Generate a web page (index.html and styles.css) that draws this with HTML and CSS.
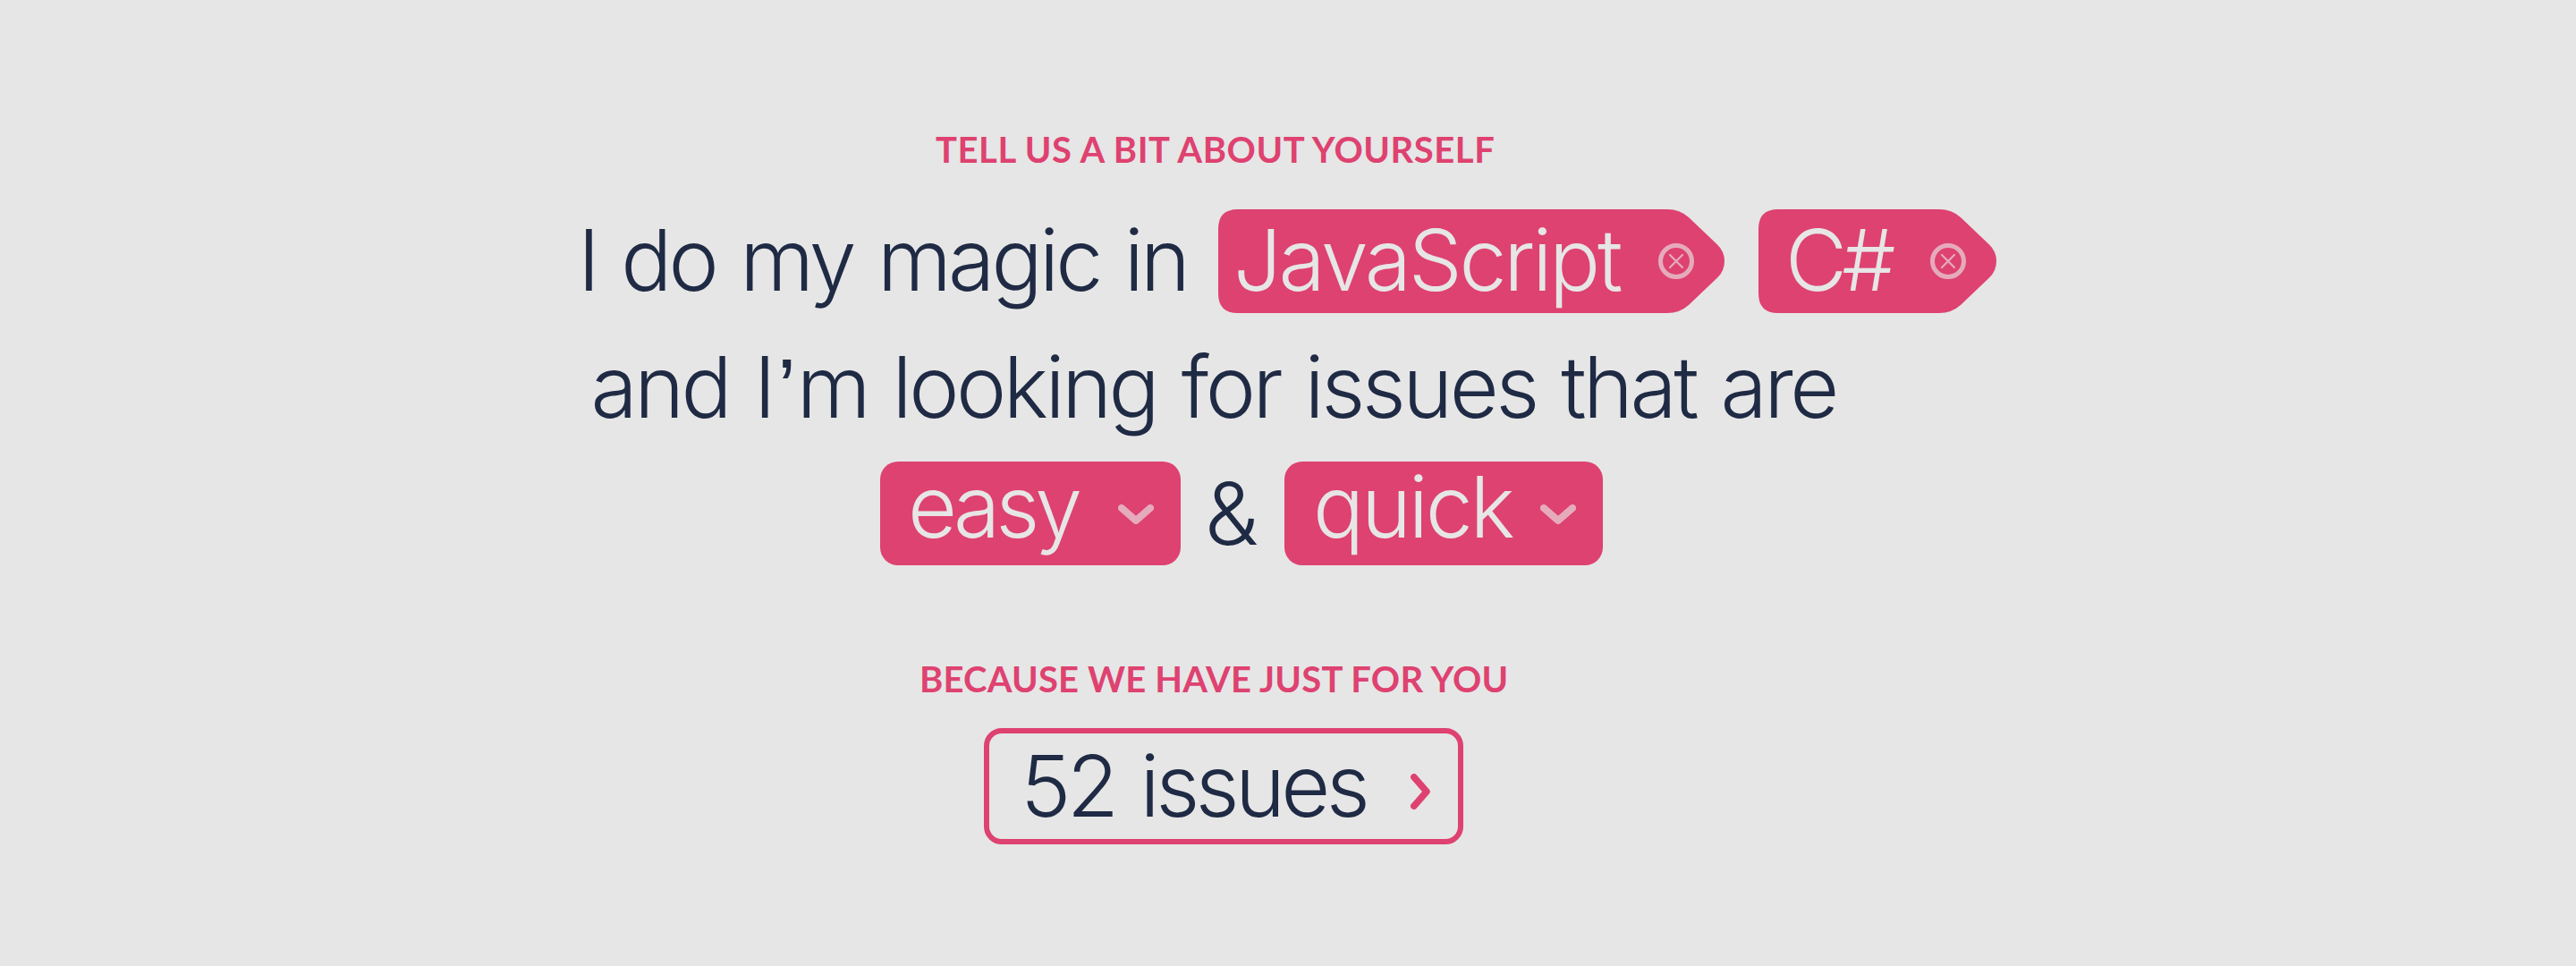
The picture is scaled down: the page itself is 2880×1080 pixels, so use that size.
FILE: index.html
```html
<!DOCTYPE html>
<html lang="en">
<head>
<meta charset="utf-8">
<title>Issue finder</title>
<link rel="stylesheet" href="styles.css">
</head>
<body>
<main class="page">
  <h2 class="label label-intro">TELL US A BIT ABOUT YOURSELF</h2>
  <div class="row row-skills">
    <span class="skills-text">I do my magic in</span>
    <span class="tag tag-js">
      <svg class="tag-shape" width="566" height="116" viewBox="0 0 566 116"><path d="M22 0H502Q516 0 526 9L558 39.500Q566 47 566 58T558 76.500L526 107Q516 116 502 116H22Q0 116 0 94V22Q0 0 22 0Z"/></svg>
      <span class="tag-text">JavaScript</span>
      <svg class="remove" width="40" height="40" viewBox="0 0 40 40"><circle cx="20" cy="20" r="17.500" stroke-width="5"/><path d="M13 13L27 27M27 13L13 27" stroke-width="2.200"/></svg>
    </span>
    <span class="tag tag-cs">
      <svg class="tag-shape" width="266" height="116" viewBox="0 0 266 116"><path d="M22 0H202Q216 0 226 9L258 39.500Q266 47 266 58T258 76.500L226 107Q216 116 202 116H22Q0 116 0 94V22Q0 0 22 0Z"/></svg>
      <span class="tag-text">C#</span>
      <svg class="remove" width="40" height="40" viewBox="0 0 40 40"><circle cx="20" cy="20" r="17.500" stroke-width="5"/><path d="M13 13L27 27M27 13L13 27" stroke-width="2.200"/></svg>
    </span>
  </div>
  <div class="row row-looking">and I<span class="apos">’</span>m looking for issues that are</div>
  <div class="row row-filters">
    <span class="select select-easy"><span class="easy">easy</span>
      <svg class="chevron" width="40" height="22" viewBox="0 0 40 22"><path d="M4 4L20 18L36 4"/></svg></span>
    <span class="amp">&amp;</span>
    <span class="select select-quick"><span class="quick">quick</span>
      <svg class="chevron" width="40" height="22" viewBox="0 0 40 22"><path d="M4 4L20 18L36 4"/></svg></span>
  </div>
  <h2 class="label label-result">BECAUSE WE HAVE JUST FOR YOU</h2>
  <a class="button"><span>52 issues</span>
    <svg class="arrow" width="22" height="40" viewBox="0 0 22 40"><path d="M3.800 3.800L18 20L3.800 36.200"/></svg></a>
</main>
</body>
</html>
```
FILE: styles.css
```css
* { box-sizing: border-box; }
body { margin: 0; background: #e6e6e6; color: #1f2a44; }
.page {
  width: 2880px;
  height: 1080px;
  padding-top: 147px;
  font: 300 95px/113px Inter, "Liberation Sans", sans-serif;
  letter-spacing: -3.5px;
  white-space: nowrap;
}
.label {
  margin: 0;
  font: 700 40px/40px Lato, sans-serif;
  letter-spacing: 0.2px;
  color: #de4270;
}
.label-intro { padding-left: 1046px; letter-spacing: 0.55px; }
.label-result { padding-left: 1028px; margin-top: 107px; }
.row { display: flex; align-items: flex-start; }
.row-skills { margin-top: 47px; padding-left: 646px; }
.skills-text { width: 716px; letter-spacing: -3.8px; word-spacing: 4.2px; }
.tag {
  position: relative;
  display: flex;
  justify-content: space-between;
  height: 116px;
  padding-right: 34px;
  color: #e6e6e6;
}
.tag-js { width: 566px; padding-left: 17px; letter-spacing: -3.25px; }
.tag-cs { width: 266px; padding-left: 30px; margin-left: 38px; }
.tag-cs .tag-text { letter-spacing: -6px; }
.tag-shape { position: absolute; left: 0; top: 0; fill: #de4270; }
.tag-text { position: relative; }
.remove {
  position: relative;
  margin-top: 38px;
  fill: none;
  stroke: #e5abbd;
  stroke-linecap: round;
}
.row-looking { display: block; height: 111px; margin-top: 26px; padding-left: 660.5px; word-spacing: 4.2px; }
.apos { margin: 0 4px 0 5px; font-family: "Liberation Sans", sans-serif; line-height: 0; }
.row-filters { height: 116px; margin-top: 29px; padding-left: 984px; }
.select {
  display: flex;
  justify-content: space-between;
  height: 116px;
  padding: 0 30px 0 31px;
  border-radius: 20px;
  background: #de4270;
  color: #e6e6e6;
  line-height: 101px;
}
.select-easy { width: 336px; }
.select-quick { width: 356px; padding-left: 32px; }
.easy { letter-spacing: -5px; }
.quick { letter-spacing: -3.2px; }
.chevron {
  margin-top: 48px;
  fill: none;
  stroke: #e5abbd;
  stroke-width: 8;
  stroke-linecap: round;
  stroke-linejoin: round;
}
.amp { width: 116px; padding-left: 27px; font-size: 96px; line-height: 117px; }
.button {
  display: flex;
  justify-content: space-between;
  width: 536px;
  height: 130px;
  margin: 35px 0 0 1100px;
  padding: 0 31px 0 35px;
  border: 6px solid #de4270;
  border-radius: 20px;
  line-height: 117px;
  letter-spacing: -4.6px;
  word-spacing: 6px;
}
.arrow {
  margin-top: 45px;
  fill: none;
  stroke: #de4270;
  stroke-width: 7.5;
  stroke-linecap: round;
  stroke-linejoin: round;
}
```
